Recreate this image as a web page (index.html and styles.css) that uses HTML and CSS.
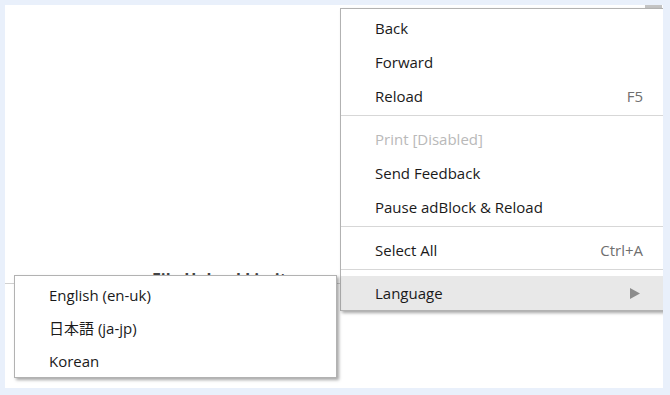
FILE: index.html
```html
<!DOCTYPE html>
<html lang="en">
<head>
    <meta charset="UTF-8">
    <title>Context Menu</title>
    <link rel="stylesheet" href="styles.css">
</head>
<body>
    <div class="panel">
        <div class="scroll-thumb"></div>

        <div class="content">
            <h2 class="section-title">File Upload Limits</h2>
        </div>

        <!-- MAIN CONTEXT MENU -->
        <ul class="menu main-menu">
            <li class="item"><span>Back</span></li>
            <li class="item"><span>Forward</span></li>
            <li class="item"><span>Reload</span><span class="shortcut">F5</span></li>
            <li class="separator"></li>
            <li class="item disabled"><span>Print [Disabled]</span></li>
            <li class="item"><span>Send Feedback</span></li>
            <li class="item"><span>Pause adBlock &amp; Reload</span></li>
            <li class="separator"></li>
            <li class="item"><span>Select All</span><span class="shortcut">Ctrl+A</span></li>
            <li class="separator"></li>
            <li class="item active">
                <span>Language</span>
                <svg class="arrow" width="10" height="11" viewBox="0 0 10 11">
                    <path d="M0 0 L10 5.5 L0 11 Z" fill="#8c8c8c"/>
                </svg>
            </li>
        </ul>

        <!-- LANGUAGE SUBMENU -->
        <ul class="menu sub-menu">
            <li class="item"><span>English (en-uk)</span></li>
            <li class="item"><span>日本語 (ja-jp)</span></li>
            <li class="item"><span>Korean</span></li>
        </ul>
    </div>
</body>
</html>
```

FILE: styles.css
```css
* {
    box-sizing: border-box;
    margin: 0;
    padding: 0;
}

body {
    background: #e9f0fb;
    font-family: 'Open Sans', 'Noto Sans CJK JP', sans-serif;
    color: #1a1a1a;
    padding: 5px;
    width: 670px;
    height: 395px;
    overflow: hidden;
}

.panel {
    position: relative;
    background: #ffffff;
    width: 658px;
    height: 383px;
    overflow: hidden;
}

.scroll-thumb {
    position: absolute;
    top: 0;
    right: 1px;
    width: 17px;
    height: 3px;
    background: #c4c4c4;
}

.content {
    padding-top: 271px;
}

.section-title {
    font-size: 16px;
    font-weight: 700;
    line-height: 7px;
    color: #444;
    padding-left: 147px;
    border-bottom: 1px solid #d0d0d0;
}

.menu {
    position: absolute;
    list-style: none;
    background: #ffffff;
    border: 1px solid #b2b2b2;
    box-shadow: 2px 2px 3px rgba(0, 0, 0, 0.35);
    font-size: 15px;
}

.main-menu {
    top: 3px;
    left: 335px;
    right: -2px;
    padding-top: 2px;
}

.sub-menu {
    top: 270px;
    left: 9px;
    width: 323px;
    padding-top: 2px;
}

.item {
    display: flex;
    justify-content: space-between;
    align-items: center;
    height: 34px;
    padding: 0 21px 0 34px;
}

.sub-menu .item {
    height: 33px;
}

.item.disabled {
    color: #b9b9b9;
}

.item.active {
    background: #e8e8e8;
}

.shortcut {
    color: #6f6f6f;
}

.arrow {
    margin-right: 3px;
}

.separator {
    height: 1px;
    background: #d7d7d7;
    margin: 2px 0 6px;
}
```
